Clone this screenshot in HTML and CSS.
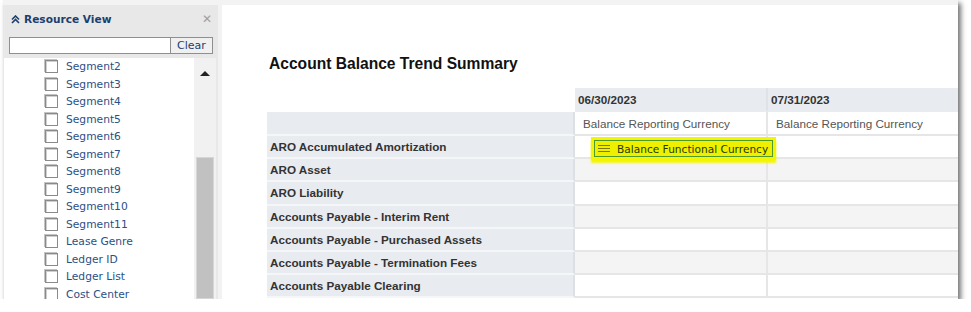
FILE: index.html
```html
<!DOCTYPE html>
<html lang="en">
<head>
    <meta charset="UTF-8">
    <title>Account Balance Trend Summary</title>
    <link rel="stylesheet" href="styles.css">
</head>
<body>
    <div class="frame">
        <div class="topstrip"></div>
        <div class="workspace">
            <div class="panel">
                <div class="panel-head">
                    <svg class="collapse" width="9" height="9" viewBox="0 0 9 9">
                        <path d="M1 4.5 L4.5 1 L8 4.5 M1 8 L4.5 4.5 L8 8" fill="none" stroke="#1c3f6e" stroke-width="1.6"/>
                    </svg>
                    <span class="panel-title">Resource View</span>
                    <span class="close">&#x2715;</span>
                </div>
                <div class="search">
                    <input type="text" class="search-box">
                    <button class="clear">Clear</button>
                </div>
                <div class="list-wrap">
                    <ul class="list">
                        <li><span class="cb"></span>Segment2</li>
                        <li><span class="cb"></span>Segment3</li>
                        <li><span class="cb"></span>Segment4</li>
                        <li><span class="cb"></span>Segment5</li>
                        <li><span class="cb"></span>Segment6</li>
                        <li><span class="cb"></span>Segment7</li>
                        <li><span class="cb"></span>Segment8</li>
                        <li><span class="cb"></span>Segment9</li>
                        <li><span class="cb"></span>Segment10</li>
                        <li><span class="cb"></span>Segment11</li>
                        <li><span class="cb"></span>Lease Genre</li>
                        <li><span class="cb"></span>Ledger ID</li>
                        <li><span class="cb"></span>Ledger List</li>
                        <li><span class="cb"></span>Cost Center</li>
                    </ul>
                    <div class="scrollbar">
                        <div class="arrow"></div>
                        <div class="thumb"></div>
                    </div>
                </div>
            </div>
            <div class="divider"></div>
            <div class="main">
                <h1>Account Balance Trend Summary</h1>
                <table class="trend">
                    <colgroup>
                        <col class="c-label">
                        <col class="c-date">
                        <col class="c-date2">
                    </colgroup>
                    <tr class="dates">
                        <td class="blank"></td>
                        <th>06/30/2023</th>
                        <th>07/31/2023</th>
                    </tr>
                    <tr class="measures">
                        <td class="label"></td>
                        <td>Balance Reporting Currency</td>
                        <td>Balance Reporting Currency</td>
                    </tr>
                    <tr>
                        <td class="label">ARO Accumulated Amortization</td>
                        <td class="drop">
                            <div class="drag-item">
                                <span class="grip"><i></i><i></i><i></i></span>
                                Balance Functional Currency
                            </div>
                        </td>
                        <td></td>
                    </tr>
                    <tr class="alt">
                        <td class="label">ARO Asset</td>
                        <td></td>
                        <td></td>
                    </tr>
                    <tr>
                        <td class="label">ARO Liability</td>
                        <td></td>
                        <td></td>
                    </tr>
                    <tr class="alt">
                        <td class="label">Accounts Payable - Interim Rent</td>
                        <td></td>
                        <td></td>
                    </tr>
                    <tr>
                        <td class="label">Accounts Payable - Purchased Assets</td>
                        <td></td>
                        <td></td>
                    </tr>
                    <tr class="alt">
                        <td class="label">Accounts Payable - Termination Fees</td>
                        <td></td>
                        <td></td>
                    </tr>
                    <tr>
                        <td class="label">Accounts Payable Clearing</td>
                        <td></td>
                        <td></td>
                    </tr>
                </table>
            </div>
        </div>
    </div>
</body>
</html>
```

FILE: styles.css
```css
body {
    margin: 0;
    background: white;
    font-family: "Liberation Sans", Arial, sans-serif;
}
.frame {
    margin-left: 3px;
    width: 955px;
    height: 299px;
    display: flex;
    flex-direction: column;
    background: white;
    box-shadow: 3px 3px 5px rgba(0,0,0,0.55);
    overflow: hidden;
}
.topstrip {
    height: 5px;
    background: #f3f3f3;
}
.workspace {
    flex: 1;
    display: flex;
    min-height: 0;
}

/* resource view panel */
.panel {
    width: 215px;
    background: #e8e8e8;
    display: flex;
    flex-direction: column;
    font-family: "DejaVu Sans", Verdana, sans-serif;
}
.panel-head {
    height: 28px;
    display: flex;
    align-items: center;
    padding-left: 8px;
    padding-right: 6px;
}
.collapse {
    margin-right: 4px;
}
.panel-title {
    font-weight: bold;
    font-size: 10.6px;
    color: #1c3f6e;
    flex: 1;
}
.close {
    color: #a0a0a0;
    font-size: 12px;
}
.search {
    display: flex;
    margin: 4px 5px 4px 6px;
    height: 17px;
}
.search-box {
    flex: 1;
    width: 0;
    min-width: 0;
    height: 17px;
    box-sizing: border-box;
    border: 1px solid #8f8f8f;
    background: white;
    margin: 0;
    padding: 0;
}
.clear {
    flex: none;
    width: 42px;
    height: 17px;
    box-sizing: border-box;
    border: 1px solid #8f8f8f;
    border-left: none;
    background: #f0f0f0;
    color: #1c3f6e;
    font-family: "DejaVu Sans", Verdana, sans-serif;
    font-size: 11px;
    padding: 0;
    margin: 0;
}
.list-wrap {
    flex: 1;
    display: flex;
    margin-left: 1px;
    min-height: 0;
}
.list {
    flex: 1;
    list-style: none;
    margin: 0;
    padding: 0;
    background: white;
    overflow: hidden;
}
.list li {
    height: 17.5px;
    display: flex;
    align-items: center;
    padding-left: 41px;
    font-size: 10.7px;
    color: #2c4f86;
}
.cb {
    width: 11px;
    height: 11px;
    border: 1px solid #8a8a8a;
    background: white;
    box-shadow: inset 1px 1px 0 #cfcfcf, -1px -1px 0 #c4c4c4;
    margin-right: 8px;
}
.scrollbar {
    width: 22px;
    background: #f1f1f1;
    position: relative;
    border-right: 2px solid #e8e8e8;
}
.arrow {
    margin: 13px auto 0;
    width: 0;
    height: 0;
    border-left: 5px solid transparent;
    border-right: 5px solid transparent;
    border-bottom: 5px solid #222;
}
.thumb {
    position: absolute;
    left: 2px;
    right: 2px;
    top: 99px;
    bottom: 0;
    background: #c1c1c1;
    border: 1px solid #d6d6d6;
}
.divider {
    width: 4px;
    background: #f2f2f2;
}

/* report */
.main {
    flex: 1;
    padding-left: 45px;
    overflow: hidden;
}
.main h1 {
    font-size: 15.6px;
    line-height: 20px;
    margin: 49px 0 14px 2px;
    color: #111;
}
.trend {
    table-layout: fixed;
    width: 693px;
    border-collapse: separate;
    border-spacing: 0;
    font-size: 11.7px;
    color: #333;
}
.c-label {
    width: 308px;
}
.c-date {
    width: 193px;
}
.c-date2 {
    width: 192px;
}
.trend tr {
    height: 23.2px;
}
.trend tr.dates,
.trend tr.measures {
    height: 24px;
}
.trend td,
.trend th {
    padding: 0 0 0 3px;
    border-bottom: 2px solid #e6e6e6;
    border-right: 2px solid #e6e6e6;
    text-align: left;
    white-space: nowrap;
    overflow: visible;
}
.trend td.blank {
    border-bottom: none;
    border-right: none;
    background: white;
}
.trend td.label {
    background: #e8ebef;
    font-weight: bold;
    border-bottom-color: #f5f6f8;
    border-right-color: #dde1e6;
}
.dates th {
    background: #e8ecf0;
    font-weight: bold;
    padding-left: 3px;
    border-bottom-color: #e8ecf0;
    border-right-color: #dfe3e8;
}
.measures td {
    color: #555;
    padding-left: 8px;
}
.alt td + td {
    background: #f4f4f4;
}
.drop {
    position: relative;
}
.drag-item {
    position: absolute;
    left: 19px;
    top: 4px;
    width: 179px;
    height: 17px;
    box-sizing: border-box;
    display: flex;
    align-items: center;
    background: #eef000;
    border: 1px solid #4f9a2e;
    font-family: "DejaVu Sans", Verdana, sans-serif;
    font-size: 10.6px;
    color: #233a05;
    z-index: 1;
    box-shadow: 0 0 0 3px #f4f500, 0 3px 2px 3px #f4f500;
}
.grip {
    display: flex;
    flex-direction: column;
    gap: 2px;
    margin: 0 7px 0 3px;
}
.grip i {
    display: block;
    width: 12px;
    height: 1px;
    background: #7a7a10;
}
```
